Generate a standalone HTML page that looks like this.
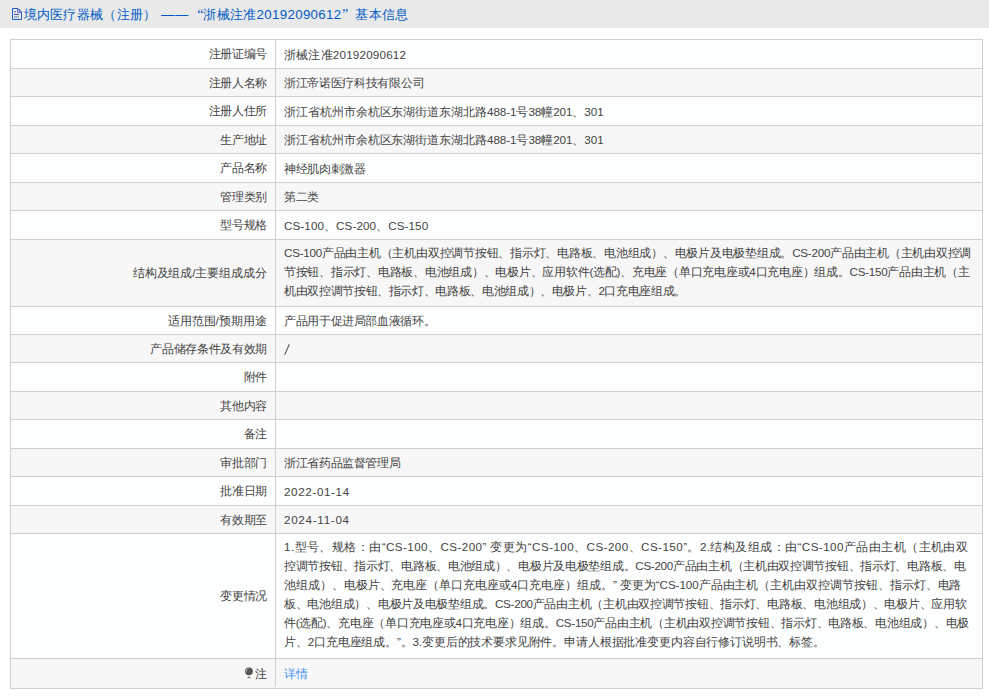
<!DOCTYPE html>
<html><head><meta charset="utf-8"><title>境内医疗器械（注册）</title>
<style>
html,body{margin:0;padding:0;background:#fff;}
body{width:989px;height:697px;position:relative;overflow:hidden;font-family:"Liberation Sans",sans-serif;color:#444;}
.hd{position:absolute;left:0;top:0;width:989px;height:28px;background:#e9e9e9;}
.h{position:absolute;white-space:nowrap;font-size:13.3px;line-height:20px;height:20px;color:#005bc4;text-align:justify;text-align-last:justify;}
.q{font-family:"Liberation Serif",serif;font-size:14px;}
.q.r{text-align:right;text-align-last:right;}
.q.l{text-align:left;text-align-last:left;}
.ic{position:absolute;left:11px;top:7px;}
.r{position:absolute;left:11px;width:971px;}
.hl{position:absolute;left:10px;width:972px;height:1px;background:#d0d0d0;}
.vl{position:absolute;width:1px;background:#d0d0d0;}
.t{position:absolute;white-space:nowrap;font-size:11.64px;line-height:19px;height:19px;text-align:justify;text-align-last:justify;}
.n{text-align:left;text-align-last:left;}
a{color:#3c8ff0;text-decoration:none;}
</style></head><body>
<div class="hd"></div>
<svg class="ic" width="12" height="14" viewBox="0 0 12 14"><path d="M1.5 1.5H7L10.5 5V12.5H1.5Z" fill="none" stroke="#1f5cc4" stroke-width="1"/><path d="M6.5 1.5V5.5H10.5" fill="none" stroke="#6a6fc8" stroke-width="1"/><path d="M7.2 2.2L9.8 4.8" stroke="#4a6fd0" stroke-width="1.4"/><rect x="3" y="4" width="2" height="1.5" fill="#8a8ad0"/><rect x="3" y="7" width="5" height="1" fill="#3a55c0"/><rect x="3" y="9" width="5" height="2" fill="#a8b2d8"/></svg>

<div class="r" style="top:40px;height:28px;background:#fdfefe"></div>
<div class="r" style="top:69px;height:27px;background:#f7f7f7"></div>
<div class="r" style="top:97px;height:28px;background:#fdfefe"></div>
<div class="r" style="top:126px;height:27px;background:#f7f7f7"></div>
<div class="r" style="top:154px;height:28px;background:#fdfefe"></div>
<div class="r" style="top:183px;height:27px;background:#f7f7f7"></div>
<div class="r" style="top:211px;height:28px;background:#fdfefe"></div>
<div class="r" style="top:240px;height:66px;background:#f7f7f7"></div>
<div class="r" style="top:307px;height:27px;background:#fdfefe"></div>
<div class="r" style="top:335px;height:27px;background:#f7f7f7"></div>
<div class="r" style="top:363px;height:28px;background:#fdfefe"></div>
<div class="r" style="top:392px;height:27px;background:#f7f7f7"></div>
<div class="r" style="top:420px;height:28px;background:#fdfefe"></div>
<div class="r" style="top:449px;height:27px;background:#f7f7f7"></div>
<div class="r" style="top:477px;height:28px;background:#fdfefe"></div>
<div class="r" style="top:506px;height:27px;background:#f7f7f7"></div>
<div class="r" style="top:534px;height:124px;background:#fdfefe"></div>
<div class="r" style="top:659px;height:29px;background:#f7f7f7"></div>
<div class="hl" style="top:39px"></div>
<div class="hl" style="top:68px"></div>
<div class="hl" style="top:96px"></div>
<div class="hl" style="top:125px"></div>
<div class="hl" style="top:153px"></div>
<div class="hl" style="top:182px"></div>
<div class="hl" style="top:210px"></div>
<div class="hl" style="top:239px"></div>
<div class="hl" style="top:306px"></div>
<div class="hl" style="top:334px"></div>
<div class="hl" style="top:362px"></div>
<div class="hl" style="top:391px"></div>
<div class="hl" style="top:419px"></div>
<div class="hl" style="top:448px"></div>
<div class="hl" style="top:476px"></div>
<div class="hl" style="top:505px"></div>
<div class="hl" style="top:533px"></div>
<div class="hl" style="top:658px"></div>
<div class="hl" style="top:688px"></div>
<div class="vl" style="left:10px;top:39px;height:650px"></div>
<div class="vl" style="left:982px;top:39px;height:650px"></div>
<div class="vl" style="left:275px;top:39px;height:648px"></div>
<svg width="10" height="12" viewBox="0 0 10 12" style="position:absolute;left:244px;top:667px"><circle cx="5" cy="4.3" r="3.9" fill="#555"/><path d="M2.3 5.2A2.9 2.9 0 0 1 4.6 1.7" stroke="#b8b8c8" stroke-width="0.9" fill="none"/><rect x="3.6" y="9.8" width="2.8" height="1.3" fill="#666"/></svg>
<div class="h fit" style="left:23.60px;top:5.00px;width:133.00px;letter-spacing:0.300px;">境内医疗器械（注册）</div>
<div class="h fit" style="left:161.00px;top:5.00px;width:28.00px;letter-spacing:0.703px;">——</div>
<div class="h q r fit" style="left:190.00px;top:5.00px;width:13.50px;">“</div>
<div class="h fit" style="left:203.30px;top:5.00px;width:138.20px;letter-spacing:0.323px;">浙械注准20192090612</div>
<div class="h q l fit" style="left:342.00px;top:5.00px;width:13.50px;">”</div>
<div class="h fit" style="left:355.40px;top:5.00px;width:53.20px;letter-spacing:0.300px;">基本信息</div>
<div class="t fit" style="left:208.60px;top:44.40px;width:58.20px;letter-spacing:-0.360px;">注册证编号</div>
<div class="t fit" style="left:284.00px;top:44.80px;width:122.20px;letter-spacing:0.205px;">浙械注准20192090612</div>
<div class="t fit" style="left:208.60px;top:72.90px;width:58.20px;letter-spacing:-0.360px;">注册人名称</div>
<div class="t fit" style="left:284.00px;top:73.30px;width:140.20px;letter-spacing:-0.317px;">浙江帝诺医疗科技有限公司</div>
<div class="t fit" style="left:208.60px;top:101.40px;width:58.20px;letter-spacing:-0.360px;">注册人住所</div>
<div class="t fit" style="left:284.00px;top:101.80px;width:319.60px;letter-spacing:-0.057px;">浙江省杭州市余杭区东湖街道东湖北路488-1号38幢201、301</div>
<div class="t fit" style="left:220.24px;top:129.90px;width:46.56px;letter-spacing:-0.360px;">生产地址</div>
<div class="t fit" style="left:284.00px;top:130.30px;width:319.60px;letter-spacing:-0.057px;">浙江省杭州市余杭区东湖街道东湖北路488-1号38幢201、301</div>
<div class="t fit" style="left:220.24px;top:158.40px;width:46.56px;letter-spacing:-0.360px;">产品名称</div>
<div class="t fit" style="left:284.00px;top:158.80px;width:81.50px;letter-spacing:-0.357px;">神经肌肉刺激器</div>
<div class="t fit" style="left:220.24px;top:186.90px;width:46.56px;letter-spacing:-0.360px;">管理类别</div>
<div class="t fit" style="left:284.00px;top:187.30px;width:35.00px;letter-spacing:-0.333px;">第二类</div>
<div class="t fit" style="left:220.24px;top:215.40px;width:46.56px;letter-spacing:-0.360px;">型号规格</div>
<div class="t fit" style="left:284.00px;top:215.80px;width:144.20px;letter-spacing:0.098px;">CS-100、CS-200、CS-150</div>
<div class="t fit" style="left:132.76px;top:262.80px;width:134.04px;letter-spacing:-0.100px;">结构及组成/主要组成成分</div>
<div class="t fit" style="left:284.00px;top:243.40px;width:687.20px;letter-spacing:-0.244px;">CS-100产品由主机（主机由双控调节按钮、指示灯、电路板、电池组成）、电极片及电极垫组成。CS-200产品由主机（主机由双控调</div>
<div class="t fit" style="left:284.00px;top:262.30px;width:685.60px;letter-spacing:-0.254px;">节按钮、指示灯、电路板、电池组成）、电极片、应用软件(选配)、充电座（单口充电座或4口充电座）组成。CS-150产品由主机（主</div>
<div class="t fit" style="left:284.00px;top:281.20px;width:402.00px;letter-spacing:-0.356px;">机由双控调节按钮、指示灯、电路板、电池组成）、电极片、2口充电座组成。</div>
<div class="t fit" style="left:167.68px;top:310.90px;width:99.12px;letter-spacing:-0.013px;">适用范围/预期用途</div>
<div class="t fit" style="left:284.00px;top:311.30px;width:151.30px;letter-spacing:-0.362px;">产品用于促进局部血液循环。</div>
<div class="t fit" style="left:150.40px;top:338.90px;width:116.40px;letter-spacing:-0.360px;">产品储存条件及有效期</div>
<div class="t fit" style="left:243.52px;top:367.40px;width:23.28px;letter-spacing:-0.360px;">附件</div>
<div class="t fit" style="left:220.24px;top:395.90px;width:46.56px;letter-spacing:-0.360px;">其他内容</div>
<div class="t fit" style="left:243.52px;top:424.40px;width:23.28px;letter-spacing:-0.360px;">备注</div>
<div class="t fit" style="left:220.24px;top:452.90px;width:46.56px;letter-spacing:-0.360px;">审批部门</div>
<div class="t fit" style="left:284.00px;top:453.30px;width:116.40px;letter-spacing:-0.360px;">浙江省药品监督管理局</div>
<div class="t fit" style="left:220.24px;top:481.40px;width:46.56px;letter-spacing:-0.360px;">批准日期</div>
<div class="t fit" style="left:284.00px;top:481.80px;width:65.80px;letter-spacing:0.633px;">2022-01-14</div>
<div class="t fit" style="left:220.24px;top:509.90px;width:46.56px;letter-spacing:-0.360px;">有效期至</div>
<div class="t fit" style="left:284.00px;top:510.30px;width:65.80px;letter-spacing:0.719px;">2024-11-04</div>
<div class="t fit" style="left:220.24px;top:585.80px;width:46.56px;letter-spacing:-0.360px;">变更情况</div>
<div class="t fit" style="left:284.00px;top:537.05px;width:684.30px;letter-spacing:0.439px;">1.型号、规格：由“CS-100、CS-200” 变更为“CS-100、CS-200、CS-150”。2.结构及组成：由“CS-100产品由主机（主机由双</div>
<div class="t fit" style="left:284.00px;top:555.95px;width:681.70px;letter-spacing:-0.291px;">控调节按钮、指示灯、电路板、电池组成）、电极片及电极垫组成。CS-200产品由主机（主机由双控调节按钮、指示灯、电路板、电</div>
<div class="t fit" style="left:284.00px;top:574.85px;width:677.40px;letter-spacing:-0.056px;">池组成）、电极片、充电座（单口充电座或4口充电座）组成。” 变更为“CS-100产品由主机（主机由双控调节按钮、指示灯、电路</div>
<div class="t fit" style="left:284.00px;top:593.75px;width:682.50px;letter-spacing:-0.277px;">板、电池组成）、电极片及电极垫组成。CS-200产品由主机（主机由双控调节按钮、指示灯、电路板、电池组成）、电极片、应用软</div>
<div class="t fit" style="left:284.00px;top:612.65px;width:685.10px;letter-spacing:-0.262px;">件(选配)、充电座（单口充电座或4口充电座）组成。CS-150产品由主机（主机由双控调节按钮、指示灯、电路板、电池组成）、电极</div>
<div class="t fit" style="left:284.00px;top:631.55px;width:540.90px;letter-spacing:-0.149px;">片、2口充电座组成。”。3.变更后的技术要求见附件。申请人根据批准变更内容自行修订说明书、标签。</div>
<div class="t fit" style="left:254.70px;top:664.30px;width:12.90px;letter-spacing:0.900px;">注</div>
<div class="t n" style="left:284.00px;top:664.30px;"><a>详情</a></div>
<svg width="8" height="13" viewBox="0 0 8 13" style="position:absolute;left:283px;top:343px"><path d="M1.7 11.8L6.3 1.2" stroke="#555" stroke-width="1.05" fill="none"/></svg>
<script>
(function(){var L=document.querySelectorAll('.fit');for(var i=0;i<L.length;i++){var e=L[i];if(e.classList.contains('q'))continue;var w=parseFloat(e.style.width);var s=e.style.letterSpacing;e.style.letterSpacing='0px';e.style.textAlign='left';e.style.textAlignLast='left';var r=document.createRange();r.selectNodeContents(e);var nat=r.getBoundingClientRect().width;var n=e.textContent.length;if(nat>0&&n>0){e.style.letterSpacing=((w-nat)/n)+'px';}else{e.style.letterSpacing=s;}e.style.textAlign='';e.style.textAlignLast='';}})();
</script>
</body></html>
